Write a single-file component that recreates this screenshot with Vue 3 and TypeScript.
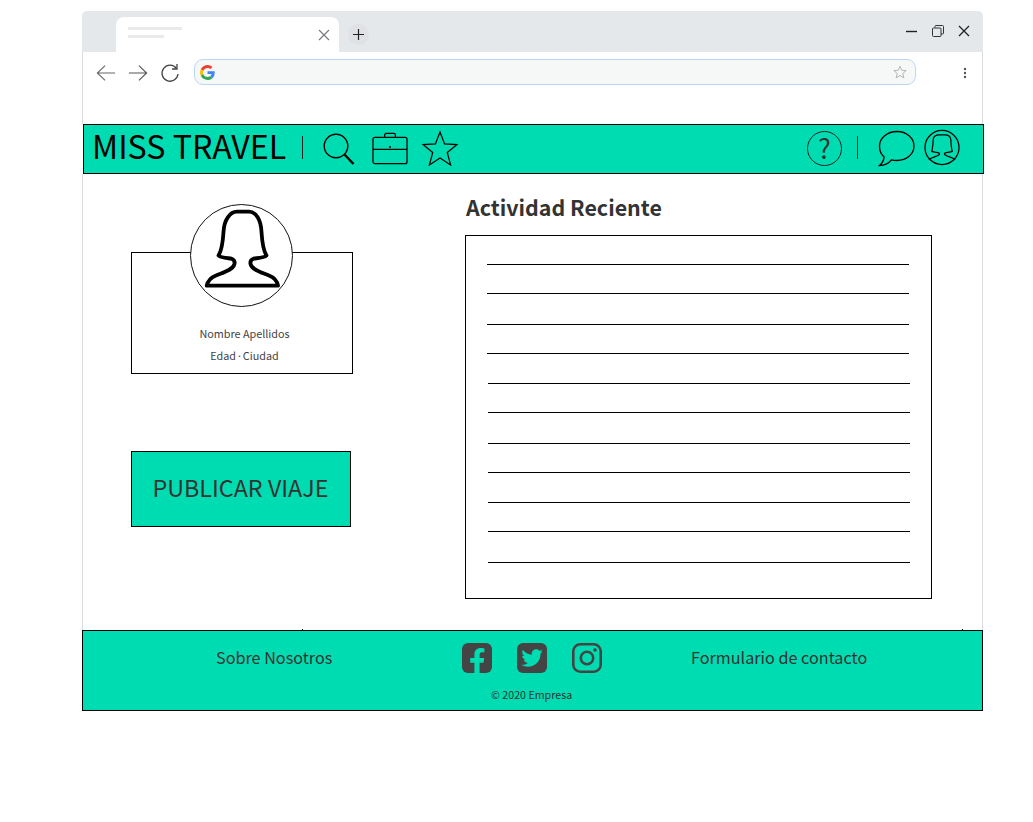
<script setup lang="ts">
// row heights of the activity list, the mockup is not perfectly regular
const rows = [29, 29, 31, 29, 30, 29, 31, 29, 30, 29, 31]
</script>

<template>
  <div class="page">
    <div class="window">
      <div class="tabbar">
        <div class="tab">
          <div class="tab-lines">
            <span class="line-a"></span>
            <span class="line-b"></span>
          </div>
          <svg class="tab-close" width="14" height="14" viewBox="0 0 14 14">
            <path d="M2 2l10 10M12 2L2 12" stroke="#77797c" stroke-width="1.2" fill="none" />
          </svg>
        </div>
        <div class="new-tab">
          <svg width="13" height="13" viewBox="0 0 13 13">
            <path d="M6.5 1v11M1 6.5h11" stroke="#222" stroke-width="1.2" fill="none" />
          </svg>
        </div>
        <div class="win-btns">
          <svg width="14" height="14" viewBox="0 0 14 14">
            <path d="M1 7.5h11" stroke="#222" stroke-width="1.4" fill="none" />
          </svg>
          <svg width="14" height="14" viewBox="0 0 14 14">
            <path d="M4 3.5V2.5a1 1 0 0 1 1-1h6.500a1 1 0 0 1 1 1V9a1 1 0 0 1-1 1H10M2.500 4h6.500a1 1 0 0 1 1 1v6.500a1 1 0 0 1-1 1H2.500a1 1 0 0 1-1-1V5a1 1 0 0 1 1-1z" stroke="#333" stroke-width="1" fill="none" />
          </svg>
          <svg width="14" height="14" viewBox="0 0 14 14">
            <path d="M2 2l10 10M12 2L2 12" stroke="#222" stroke-width="1.3" fill="none" />
          </svg>
        </div>
      </div>

      <div class="toolbar">
        <svg width="20" height="20" viewBox="0 0 22 20">
          <path d="M21 10H2M10 2l-8.500 8 8.500 8" stroke="#666" stroke-width="1.200" fill="none" />
        </svg>
        <svg width="20" height="20" viewBox="0 0 22 20">
          <path d="M1 10h19M12 2l8.500 8-8.500 8" stroke="#555" stroke-width="1.200" fill="none" />
        </svg>
        <svg width="20" height="20" viewBox="0 0 20 20">
          <path d="M16.500 5.500A8 8 0 1 0 18 11" stroke="#444" stroke-width="1.300" fill="none" />
          <path d="M17 1v5h-5" stroke="#444" stroke-width="1.300" fill="none" />
        </svg>
        <div class="omnibox">
          <svg width="15" height="15" viewBox="0 0 48 48">
            <path fill="#EA4335" d="M24 9.500c3.540 0 6.710 1.220 9.210 3.600l6.850-6.850C35.900 2.380 30.470 0 24 0 14.620 0 6.510 5.380 2.560 13.220l7.980 6.190C12.430 13.720 17.740 9.500 24 9.500z" />
            <path fill="#4285F4" d="M46.980 24.550c0-1.570-.15-3.090-.38-4.550H24v9.020h12.940c-.58 2.960-2.260 5.480-4.780 7.180l7.730 6c4.510-4.180 7.090-10.360 7.090-17.650z" />
            <path fill="#FBBC05" d="M10.530 28.590c-.48-1.450-.76-2.990-.76-4.590s.27-3.140.76-4.590l-7.980-6.190C.92 16.460 0 20.120 0 24c0 3.880.92 7.540 2.560 10.780l7.970-6.190z" />
            <path fill="#34A853" d="M24 48c6.480 0 11.930-2.130 15.890-5.810l-7.730-6c-2.150 1.450-4.920 2.300-8.160 2.300-6.260 0-11.570-4.220-13.470-9.910l-7.980 6.190C6.510 42.620 14.620 48 24 48z" />
          </svg>
          <svg class="omni-star" width="14" height="14" viewBox="0 0 24 24">
            <path d="M12 2l3 7 7.500.7-5.700 5 1.700 7.300L12 18l-6.500 4 1.700-7.300-5.700-5L9 9z" stroke="#aaa" stroke-width="1.500" fill="none" />
          </svg>
        </div>
        <svg class="kebab" width="4" height="12" viewBox="0 0 4 12">
          <circle cx="2" cy="2" r="1.200" fill="#555" />
          <circle cx="2" cy="6" r="1.200" fill="#555" />
          <circle cx="2" cy="10" r="1.200" fill="#555" />
        </svg>
      </div>

      <header class="navbar">
        <span class="brand">MISS TRAVEL</span>
        <span class="divider"></span>
        <svg class="ic-search" width="32" height="34" viewBox="0 0 32 34">
          <circle cx="13" cy="13" r="11.800" stroke="#000" stroke-width="1.400" fill="none" />
          <path d="M21.500 21.500L30.500 31" stroke="#000" stroke-width="2.400" fill="none" />
        </svg>
        <svg class="ic-case" width="36" height="33" viewBox="0 0 37 33">
          <rect x="1" y="5" width="35" height="27" rx="2" stroke="#000" stroke-width="1.300" fill="none" />
          <path d="M1 17.500h35M13 5V2.500a1.500 1.500 0 0 1 1.500-1.500h8a1.500 1.500 0 0 1 1.500 1.500V5" stroke="#000" stroke-width="1.300" fill="none" />
          <circle cx="18.500" cy="15" r="1" fill="#000" />
        </svg>
        <svg class="ic-star" width="36" height="36" viewBox="0 0 37 36">
          <path d="M18.500 1.500l4.700 12.300 12.800.6-10 8.300 3.400 12.700-10.900-7.100-10.900 7.100 3.400-12.700-10-8.300 12.800-.6z" stroke="#000" stroke-width="1.300" fill="none" />
        </svg>
        <div class="nav-right">
          <div class="ic-help">?</div>
          <span class="divider"></span>
          <svg class="ic-chat" width="37" height="37" viewBox="0 0 37 37">
            <path d="M19 1.500c9.500 0 17 6.400 17 14.500s-7.500 14.500-17 14.500c-2 0-3.800-.2-5.500-.7C10.500 33.500 6 35.500 1.500 35.500c2.500-2 4.300-4.700 4.600-8.600C2.800 24.200 1.500 20.300 1.500 16 1.500 7.900 9.500 1.500 19 1.500z" stroke="#000" stroke-width="1.300" fill="none" />
          </svg>
          <svg class="ic-user" width="36" height="37" viewBox="0 0 37 37">
            <circle cx="18.500" cy="18.500" r="17.500" stroke="#000" stroke-width="1.300" fill="none" />
            <path d="M5 31c3-2.500 8-3 10.500-5 .8-1 .5-1.500-.5-2-2-.5-5-.5-7-1.500 1-4 1.300-8.500 1.500-12.500C10 6 13 5.500 15.500 5.500h6C24 5.500 27 6 27.500 10c.2 4 .5 8.500 1.500 12.500-2 1-5 1-7 1.500-1 .5-1.300 1-.5 2 2.500 2 7.500 2.500 10.500 5" stroke="#000" stroke-width="1.300" fill="none" />
          </svg>
        </div>
      </header>

      <main class="content">
        <section class="left">
          <div class="profile">
            <div class="avatar">
              <svg width="104" height="104" viewBox="0 0 104 104">
                <path d="M16.700 81.700C18 76 21 73.500 26 71.500c7-3 17-5.500 18.500-11.500.5-2.500-.5-4.500-3.500-5.500-4-.5-10-.5-12.500-3C32 46 33 36 33.500 28 34 16 40 7.700 47 7.700h12C66 7.700 71 16 71.500 28c.5 8 1.500 18 5 23.500-2.500 2.500-8.500 2.500-12.500 3-3 1-4 3-3.500 5.500 1.500 6 11.500 8.500 18.500 11.500 5 2 8 4.500 9 10.200z" stroke="#000" stroke-width="3.800" fill="none" stroke-linejoin="round" />
              </svg>
            </div>
            <p>Nombre Apellidos</p>
            <p class="tight">Edad · Ciudad</p>
          </div>
          <button class="publish">PUBLICAR VIAJE</button>
        </section>

        <section class="right">
          <h2>Actividad Reciente</h2>
          <div class="activity">
            <div
              v-for="(h, i) in rows"
              :key="i"
              class="row"
              :class="{ shifted: i > 3 }"
              :style="{ height: h + 'px' }"
            ></div>
          </div>
        </section>
      </main>

      <footer class="footer">
        <div class="footer-top">
          <a class="about">Sobre Nosotros</a>
          <div class="social">
            <svg class="brand-ic" width="30" height="30" viewBox="0 32 448 448">
              <path fill="#444" d="M400 32H48A48 48 0 0 0 0 80v352a48 48 0 0 0 48 48h137.250V327.690h-63V256h63v-54.640c0-62.150 37-96.480 93.670-96.480 27.140 0 55.520 4.840 55.520 4.840v61h-31.270c-30.810 0-40.420 19.120-40.420 38.730V256h68.780l-11 71.690h-57.780V480H400a48 48 0 0 0 48-48V80a48 48 0 0 0-48-48z" />
            </svg>
            <svg class="brand-ic" width="30" height="30" viewBox="0 32 448 448">
              <path fill="#444" d="M400 32H48C21.500 32 0 53.500 0 80v352c0 26.500 21.500 48 48 48h352c26.500 0 48-21.500 48-48V80c0-26.500-21.500-48-48-48zm-48.900 158.800c.2 2.800.2 5.700.2 8.500 0 86.700-66 186.600-186.600 186.600-37.200 0-71.700-10.800-100.700-29.400 5.300.6 10.400.8 15.800.8 30.700 0 58.900-10.400 81.400-28-28.800-.6-53-19.500-61.300-45.500 10.100 1.500 19.200 1.500 29.600-1.200-30-6.100-52.500-32.500-52.500-64.400v-.8c8.700 4.900 18.900 7.900 29.600 8.300a65.447 65.447 0 0 1-29.200-54.600c0-12.200 3.200-23.400 8.900-33.100 32.300 39.800 80.800 65.800 135.200 68.600-9.300-44.500 24-80.600 64-80.600 18.900 0 35.900 7.900 47.900 20.700 14.800-2.800 29-8.300 41.600-15.800-4.900 15.200-15.200 28-28.800 36.100 13.200-1.400 26-5.100 37.800-10.200-8.900 13.100-20.100 24.700-32.900 34z" />
            </svg>
            <svg width="30" height="30" viewBox="0 0 30 30">
              <rect x="1.300" y="1.300" width="27.400" height="27.400" rx="7" stroke="#444" stroke-width="2.600" fill="none" />
              <circle cx="15" cy="15" r="6.200" stroke="#444" stroke-width="2.600" fill="none" />
              <circle cx="23" cy="7" r="1.800" fill="#444" />
            </svg>
          </div>
          <a class="contact">Formulario de contacto</a>
        </div>
        <p class="copy">© 2020 Empresa</p>
      </footer>
    </div>
  </div>
</template>

<style>
body {
  background: #fff;
}
</style>

<style scoped>
.page {
  padding: 11px 0 0 82px;
  height: 811px;
  font-family: "Noto Sans CJK JP", "Noto Sans", sans-serif;
  color: #333;
  overflow: hidden;
}

.window {
  width: 901px;
  box-sizing: border-box;
}

.tabbar {
  height: 41px;
  background: #e5e8eb;
  border-radius: 5px 5px 0 0;
  display: flex;
  align-items: flex-end;
  padding-left: 34px;
  position: relative;
}

.tab {
  width: 223px;
  height: 35px;
  background: #fff;
  border-radius: 8px 8px 0 0;
  display: flex;
  justify-content: space-between;
  align-items: center;
  padding: 0 8px 0 12px;
  box-sizing: border-box;
}

.tab-lines {
  display: flex;
  flex-direction: column;
  gap: 5px;
  margin-bottom: 5px;
}

.line-a {
  width: 54px;
  height: 3px;
  background: #e8eaec;
}

.line-b {
  width: 36px;
  height: 3px;
  background: #e8eaec;
}

.new-tab {
  width: 21px;
  height: 21px;
  border-radius: 50%;
  background: #dfe1e4;
  margin: 0 0 7px 9px;
  display: flex;
  align-items: center;
  justify-content: center;
}

.win-btns {
  margin-left: auto;
  align-self: flex-start;
  margin-top: 13px;
  margin-right: 12px;
  display: flex;
  gap: 12px;
}

.toolbar {
  height: 72px;
  box-sizing: border-box;
  border-left: 1px solid #dadce0;
  border-right: 1px solid #dadce0;
  padding: 7px 0 0 13px;
  display: flex;
  align-items: flex-start;
}

.toolbar > svg {
  margin-top: 4px;
  margin-right: 12px;
}

.omnibox {
  width: 722px;
  height: 26px;
  box-sizing: border-box;
  background: #f6f8f8;
  border: 1px solid #bcd6f8;
  border-radius: 9px;
  margin-left: 2px;
  padding: 0 8px 0 5px;
  display: flex;
  align-items: center;
  justify-content: space-between;
}

.toolbar > .kebab {
  margin: 8px 0 0 47px;
}

.navbar {
  width: 901px;
  height: 50px;
  box-sizing: border-box;
  margin-left: 1px;
  background: #00dcb1;
  border: 1px solid #000;
  display: flex;
  align-items: center;
  padding-left: 8px;
}

.brand {
  font-size: 32.2px;
  color: #000;
  white-space: nowrap;
  width: 210px;
  margin-top: -8px;
}

.divider {
  width: 1px;
  height: 23px;
  background: #222;
  flex: none;
  margin-top: -3px;
}

.ic-search {
  margin-left: 20px;
  margin-top: 1px;
}

.ic-case {
  margin-left: 17px;
  margin-top: -2px;
}

.ic-star {
  margin-left: 14px;
  margin-top: -2px;
}

.nav-right {
  margin-left: auto;
  display: flex;
  align-items: center;
  padding-right: 23px;
}

.ic-help {
  width: 35px;
  height: 35px;
  box-sizing: border-box;
  border: 1px solid #222;
  border-radius: 50%;
  font-size: 27px;
  line-height: 32px;
  text-align: center;
  color: #333;
  margin: -2px 15px 0 0;
}

.ic-chat {
  margin: -2px 0 0 20px;
}

.ic-user {
  margin: -4px 0 0 9px;
}

.content {
  height: 456px;
  box-sizing: border-box;
  border-left: 1px solid #dadce0;
  border-right: 1px solid #dadce0;
  display: flex;
}

.left {
  width: 382px;
  flex: none;
  padding: 78px 0 0 48px;
  box-sizing: border-box;
}

.profile {
  width: 222px;
  height: 122px;
  box-sizing: border-box;
  border: 1px solid #000;
  position: relative;
  padding: 69px 0 0 5px;
  text-align: center;
  font-size: 10.8px;
  color: #444;
}

.profile p {
  margin: 0;
  height: 22px;
  line-height: 22px;
}

.profile .tight {
  word-spacing: -2px;
}

.avatar {
  position: absolute;
  left: 58px;
  top: -49px;
  width: 103px;
  height: 103px;
  box-sizing: border-box;
  border: 1px solid #111;
  border-radius: 50%;
  background: #fff;
  display: flex;
  align-items: center;
  justify-content: center;
}

.avatar svg {
  margin: -1px;
  flex: none;
}

.publish {
  display: block;
  width: 220px;
  height: 76px;
  margin-top: 77px;
  background: #00dcb1;
  border: 1px solid #000;
  border-radius: 0;
  padding: 0 1px 4px 0;
  font-family: inherit;
  font-size: 23.3px;
  color: #333;
}

.right {
  flex: 1;
}

.right h2 {
  margin: 16px 0 0;
  padding-left: 1px;
  height: 45px;
  font-size: 21.4px;
  line-height: 34px;
  font-weight: 700;
  color: #333;
}

.activity {
  width: 467px;
  height: 364px;
  box-sizing: border-box;
  border: 1px solid #000;
  padding: 0 22px 0 21px;
}

.row {
  box-sizing: border-box;
  border-bottom: 1px solid #000;
}

.row.shifted {
  margin: 0 -1px 0 1px;
}

.footer {
  height: 81px;
  box-sizing: border-box;
  background: #00dcb1;
  border: 1px solid #000;
  position: relative;
}

/* the two stray tick marks above the footer line */
.footer::before,
.footer::after {
  content: "";
  position: absolute;
  top: -2px;
  width: 1px;
  height: 1px;
  background: #000;
}

.footer::before {
  left: 219px;
}

.footer::after {
  left: 879px;
}

.footer-top {
  display: flex;
  align-items: flex-start;
  height: 55px;
  padding-top: 12px;
  box-sizing: border-box;
}

.about {
  width: 379px;
  padding-left: 133px;
  box-sizing: border-box;
  font-size: 16.2px;
  line-height: 28px;
  white-space: nowrap;
}

.social {
  display: flex;
  gap: 25px;
}

.brand-ic {
  border-radius: 6px;
}

.contact {
  margin-left: 89px;
  font-size: 16.2px;
  line-height: 28px;
  white-space: nowrap;
}

.copy {
  margin: 0;
  padding-left: 408px;
  font-size: 10.7px;
  line-height: 18px;
}
</style>
